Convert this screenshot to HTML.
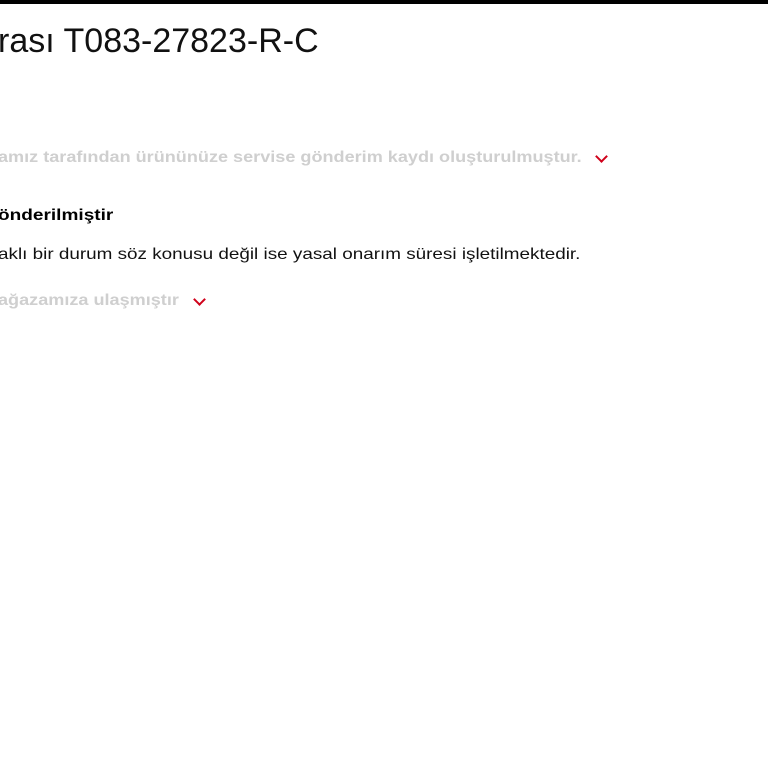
<!DOCTYPE html>
<html><head><meta charset="utf-8"><style>
body{margin:0;width:768px;height:768px;background:#fff;overflow:hidden;position:relative;font-family:"Liberation Sans",sans-serif;}
.bar{position:absolute;left:0;top:0;width:768px;height:4px;background:#000;}
.t{position:absolute;left:-2px;white-space:nowrap;transform-origin:0 0;}
.h{top:22px;font-size:34px;color:#111;}
.g{font-weight:bold;font-size:16px;color:#cfcfcf;transform:scaleX(1.13);}
.chev{position:absolute;width:7px;height:7px;border-right:2px solid #d0021b;border-bottom:2px solid #d0021b;transform:rotate(45deg);}
</style></head><body>
<div class="bar"></div>
<div class="t h">rası T083-27823-R-C</div>
<div class="t g" style="top:149px;">amız tarafından ürününüze servise gönderim kaydı oluşturulmuştur.</div>
<div class="chev" style="left:597px;top:152px;"></div>
<div class="t" style="top:207px;font-size:16px;font-weight:bold;color:#000;transform:scaleX(1.19);">önderilmiştir</div>
<div class="t" style="top:246px;font-size:16px;color:#111;transform:scaleX(1.18);">aklı bir durum söz konusu değil ise yasal onarım süresi işletilmektedir.</div>
<div class="t g" style="top:292px;">ağazamıza ulaşmıştır</div>
<div class="chev" style="left:195px;top:295px;"></div>
</body></html>
